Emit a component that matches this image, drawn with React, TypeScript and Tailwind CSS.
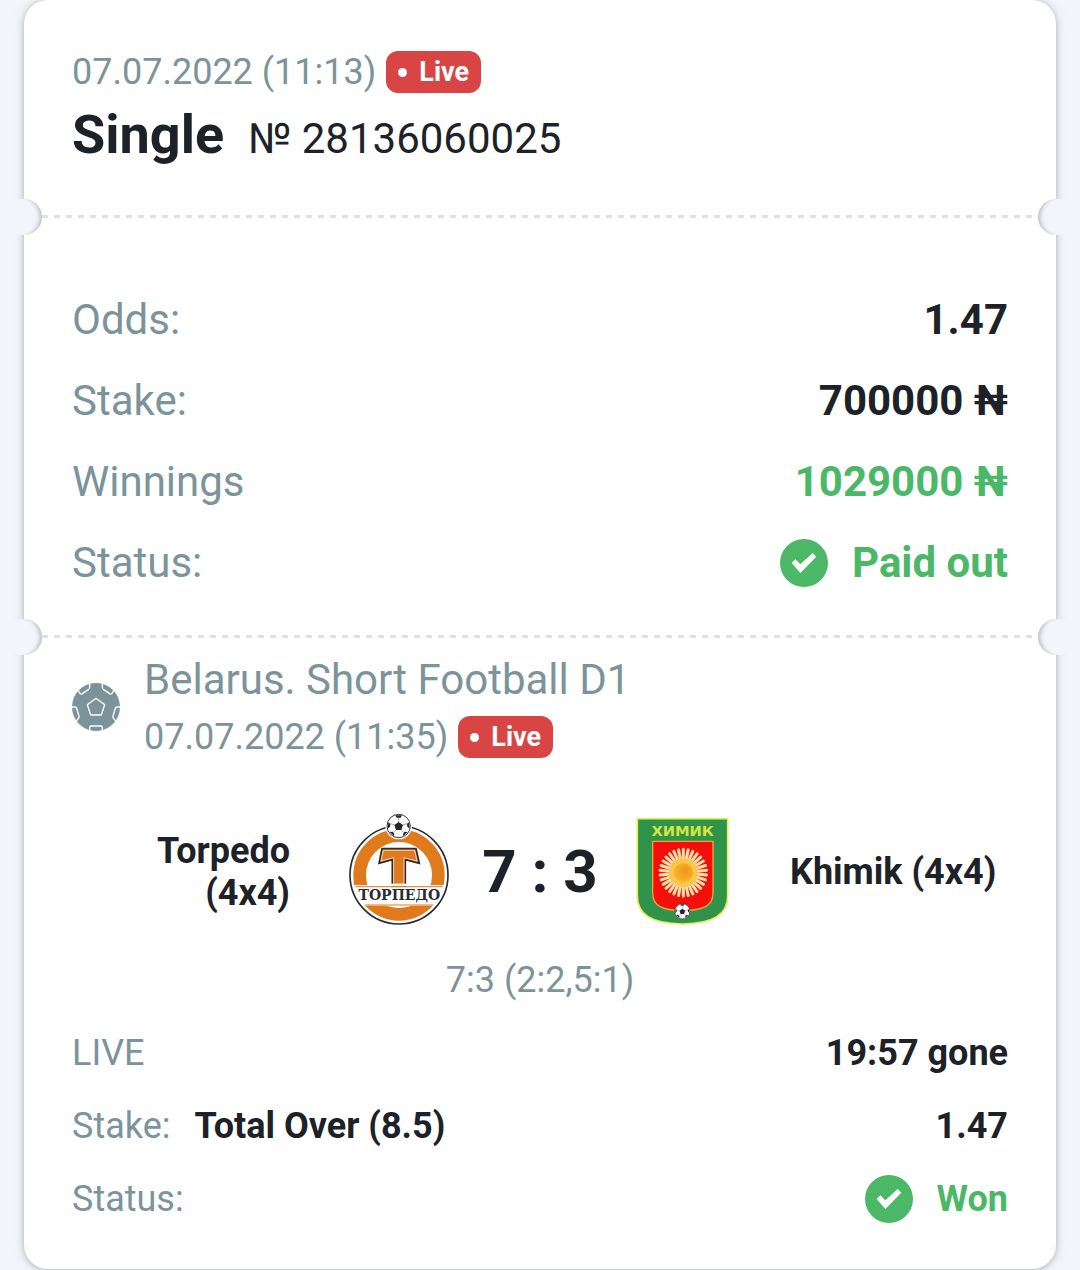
import type { ReactNode } from "react";

interface ISummaryRowProps {
  label: string;
  children: ReactNode;
}

interface IDateLineProps {
  date: string;
}

const LiveBadge = () => (
  <span className="flex h-[42px] items-center gap-3 rounded-xl bg-[#d94545] px-3 text-[27px] leading-none font-bold text-white">
    <span className="h-[9px] w-[9px] rounded-full bg-white" />
    Live
  </span>
);

const DateLine = ({ date }: IDateLineProps) => (
  <div className="flex items-center gap-2.5 text-4xl leading-[42px] text-[#7b949b]">
    <time>{date}</time>
    <LiveBadge />
  </div>
);

const TicketDivider = () => (
  <div className="relative flex items-center px-[18px]">
    <span className="absolute -left-3 h-9 w-[30px] rounded-r-full bg-[#f4f5fa] shadow-[inset_-5px_0_4px_-3px_rgba(30,34,50,0.28)]" />
    <div className="h-[3px] flex-1 bg-[repeating-linear-gradient(90deg,#dfe1e8_0_6px,transparent_6px_12px)]" />
    <span className="absolute -right-3 h-9 w-[30px] rounded-l-full bg-[#f4f5fa] shadow-[inset_5px_0_4px_-3px_rgba(30,34,50,0.28)]" />
  </div>
);

const CheckCircle = () => (
  <svg viewBox="0 0 144 144" className="h-12 w-12 shrink-0" aria-hidden="true">
    <circle cx="72" cy="72" r="72" fill="#4bb868" />
    <path d="M35 72 46 61 61 76 98 42 109 53 61 102Z" fill="#fff" />
  </svg>
);

const FootballIcon = () => (
  <svg viewBox="0 0 144 144" className="h-12 w-12 shrink-0" aria-hidden="true">
    <circle cx="72" cy="72" r="72" fill="#7b949b" />
    <g fill="none" stroke="#fff" strokeWidth="4" strokeLinejoin="round">
      <path d="M72 46 98 65 88 96H56L46 65Z" />
      <path d="M18 21 24 31Q27 35 31 32L49 20Q53 17 53 13V3" />
      <path d="M126 21 120 31Q117 35 113 32L95 20Q91 17 91 13V3" />
      <path d="M0 72H9Q13 72 14 76L21 99Q22 103 19 107L13 114" />
      <path d="M144 72H135Q131 72 130 76L123 99Q122 103 125 107L131 114" />
      <path d="M53 143V134Q53 129 58 129H86Q91 129 91 134V143" />
    </g>
  </svg>
);

const SmallBall = () => (
  <>
    <circle r="35" fill="#fff" stroke="#33363c" strokeWidth="3" />
    <path
      d="M0-12 13-3 8 12H-8L-13-3ZM-10-32 10-32 6-25H-6ZM31-11 33 8 26 2 25-7ZM-31-11-33 8-26 2-25-7ZM14 30 27 18 18 17 13 24ZM-14 30-27 18-18 17-13 24Z"
      fill="#22252b"
    />
    <path
      d="M0-12V-25M13-3 25-7M8 12 15 20M-8 12-15 20M-13-3-25-7"
      stroke="#777b80"
      strokeWidth="2"
    />
  </>
);

const TorpedoLogo = () => (
  <svg viewBox="9 33 360 360" className="h-[120px] w-[120px] shrink-0" role="img" aria-label="Torpedo">
    <circle cx="192" cy="222" r="147" fill="#fff" />
    <circle cx="192" cy="222" r="118" fill="none" stroke="#e07a1c" strokeWidth="38" />
    <path d="M50 252H334V314H50Z" fill="#fff" />
    <path d="M61 257H323M89 312H295" stroke="#e07a1c" strokeWidth="3" />
    <circle cx="192" cy="222" r="147" fill="none" stroke="#292b30" strokeWidth="5" />
    <path
      d="M141 143H243L253 187 211 176V250H172V176L132 187Z"
      fill="#e07a1c"
      stroke="#292b30"
      strokeWidth="5"
    />
    <path
      d="M145 148H239L246 180 207 170V250H176V170L138 180Z"
      fill="#e07a1c"
      stroke="#fff"
      strokeWidth="2"
    />
    <path d="M168 251H215" stroke="#fff" strokeWidth="6" />
    <path d="M168 257H215" stroke="#e07a1c" strokeWidth="3" />
    <text
      x="193"
      y="298"
      textAnchor="middle"
      className="font-['DejaVu_Serif',serif] text-[42px] font-bold"
      fill="#292b30"
    >
      ТОРПЕДО
    </text>
    <g transform="translate(191 75)">
      <circle r="40" fill="#fff" />
      <SmallBall />
    </g>
  </svg>
);

const PETALS = Array.from({ length: 30 }, (_, index) => (index * Math.PI) / 15);

const KhimikLogo = () => (
  <svg viewBox="6 33 360 360" className="h-[120px] w-[120px] shrink-0" role="img" aria-label="Khimik">
    <defs>
      <radialGradient id="sun" cx="0.62" cy="0.42" r="0.65">
        <stop offset="0" stopColor="#f0931a" />
        <stop offset="1" stopColor="#fab92c" />
      </radialGradient>
    </defs>
    <path
      d="M52 53H323V285C323 340 282 367 187 369C93 367 52 340 52 285Z"
      fill="#2f9449"
      stroke="#e2ee5a"
      strokeWidth="5"
    />
    <path
      d="M98 121H279V275C279 316 249 328 187 329C128 328 98 316 98 275Z"
      fill="#f50f0b"
      stroke="#f2a33c"
      strokeWidth="4"
    />
    <text
      x="188"
      y="105"
      textAnchor="middle"
      className="font-['DejaVu_Sans',sans-serif] text-[44px] font-bold"
      fill="#d9e341"
    >
      ХИМИК
    </text>
    <g stroke="#fde0a8" strokeWidth="9" strokeLinecap="round">
      {PETALS.map((angle) => (
        <line
          key={angle}
          x1="190"
          y1="215"
          x2={190 + Math.sin(angle) * 70}
          y2={215 + Math.cos(angle) * 70}
        />
      ))}
    </g>
    <circle cx="190" cy="215" r="43" fill="#fdc648" />
    <circle cx="190" cy="215" r="29" fill="url(#sun)" />
    <g transform="translate(187 331) scale(0.66)">
      <SmallBall />
    </g>
  </svg>
);

const SummaryRow = ({ label, children }: ISummaryRowProps) => (
  <div className="flex items-center justify-between">
    <dt className="text-[#7b949b]">{label}</dt>
    <dd className="flex items-center gap-6 font-bold">{children}</dd>
  </div>
);

const App = () => {
  return (
    <main className="min-h-screen bg-[#f4f5fa] px-6 pb-px font-[Roboto,sans-serif] text-[#1d2229]">
      <article className="rounded-3xl bg-white shadow-[0_1px_6px_rgba(30,34,50,0.3),0_0_18px_rgba(30,34,50,0.06)]">
        <header className="px-12 pt-[51px] pb-[45px]">
          <DateLine date="07.07.2022 (11:13)" />
          <div className="mt-2.5 flex items-baseline gap-6">
            <h1 className="text-[54px] leading-[63px] font-bold">Single</h1>
            <span className="text-[42px] leading-[63px]">№ 28136060025</span>
          </div>
        </header>

        <TicketDivider />

        <dl className="flex flex-col gap-8 px-12 pt-[77px] pb-[48px] text-[42px] leading-[49px]">
          <SummaryRow label="Odds:">1.47</SummaryRow>
          <SummaryRow label="Stake:">700000 ₦</SummaryRow>
          <SummaryRow label="Winnings">
            <span className="text-[#4bb868]">1029000 ₦</span>
          </SummaryRow>
          <SummaryRow label="Status:">
            <CheckCircle />
            <span className="text-[#4bb868]">Paid out</span>
          </SummaryRow>
        </dl>

        <TicketDivider />

        <section className="px-12 pt-[18px] pb-[46px]">
          <div className="flex items-center gap-6">
            <FootballIcon />
            <div>
              <h2 className="mb-3 text-[42px] leading-[48px] text-[#7b949b]">
                Belarus. Short Football D1
              </h2>
              <DateLine date="07.07.2022 (11:35)" />
            </div>
          </div>

          <div className="mt-[54px] flex items-center text-4xl leading-[42px] font-bold">
            <div className="flex-1 pr-12 text-right">Torpedo (4x4)</div>
            <TorpedoLogo />
            <div className="w-[164px] shrink-0 text-center text-[60px] leading-[72px]">
              7 : 3
            </div>
            <KhimikLogo />
            <div className="flex-1 pl-12">Khimik (4x4)</div>
          </div>

          <p className="mt-[27px] text-center text-4xl leading-[42px] text-[#7b949b]">
            7:3 (2:2,5:1)
          </p>

          <dl className="mt-7 flex flex-col gap-[25px] text-4xl leading-[48px]">
            <SummaryRow label="LIVE">19:57 gone</SummaryRow>
            <div className="flex items-center gap-6">
              <dt className="text-[#7b949b]">Stake:</dt>
              <dd className="flex flex-1 justify-between font-bold">
                <span>Total Over (8.5)</span>
                <span>1.47</span>
              </dd>
            </div>
            <SummaryRow label="Status:">
              <CheckCircle />
              <span className="text-[#4bb868]">Won</span>
            </SummaryRow>
          </dl>
        </section>
      </article>
    </main>
  );
};

export default App;
